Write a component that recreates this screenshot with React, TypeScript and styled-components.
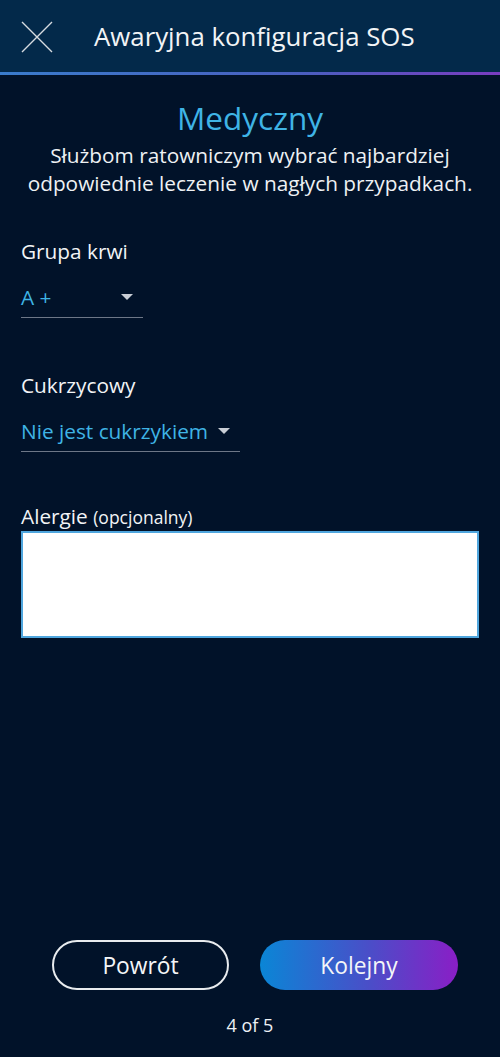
import * as React from 'react'
import styled, { createGlobalStyle } from 'styled-components'

const GlobalStyle = createGlobalStyle`
  html, body {
    margin: 0;
    padding: 0;
    background: #011229;
  }
  body {
    font-family: 'Open Sans', 'Noto Sans', sans-serif;
    color: #ffffff;
  }
`

const Screen = styled('div')`
  width: 500px;
  height: 1057px;
  display: flex;
  flex-direction: column;
  background: #011229;
  overflow: hidden;
`

const Header = styled('header')`
  height: 72px;
  display: flex;
  align-items: center;
  padding-left: 21px;
  background: #03294a;
  border-bottom: 3px solid transparent;
  border-image: linear-gradient(90deg, #3a7ccc 0%, #4a5fc0 60%, #7a3cc0 100%) 1;
  flex-shrink: 0;
`

const CloseButton = styled('button')`
  width: 32px;
  height: 32px;
  padding: 0;
  border: none;
  background: none;
  display: flex;
  margin-right: 41px;
  margin-top: 2px;
`

const Title = styled('h1')`
  margin: 0;
  font-size: 25.8px;
  font-weight: 400;
  color: #f2f4f6;
`

const Body = styled('main')`
  flex: 1;
  display: flex;
  flex-direction: column;
  padding: 23px 21px 0;
`

const SectionTitle = styled('h2')`
  margin: 0;
  text-align: center;
  font-size: 31.5px;
  line-height: 40px;
  font-weight: 400;
  color: #3fb4e5;
`

const Intro = styled('p')`
  margin: 3px 0 0;
  text-align: center;
  font-size: 20.8px;
  line-height: 28px;
  color: #eef1f4;
`

const Field = styled('div')<{ $top: number }>`
  margin-top: ${p => p.$top}px;
  display: flex;
  flex-direction: column;
`

const Label = styled('label')`
  font-size: 20.8px;
  line-height: 28px;
  color: #f2f4f6;
`

const Hint = styled('span')`
  font-size: 17.5px;
`

const Select = styled('div')<{ $width: number }>`
  width: ${p => p.$width}px;
  margin-top: 16px;
  height: 37px;
  display: flex;
  align-items: center;
  justify-content: space-between;
  border-bottom: 1px solid #6d7787;
  box-sizing: border-box;
  padding-right: 10px;
  padding-bottom: 4px;
  font-size: 20.8px;
  color: #3fb4e5;
`

const Caret = styled('span')`
  width: 0;
  height: 0;
  border-left: 6px solid transparent;
  border-right: 6px solid transparent;
  border-top: 6px solid #c9ced6;
`

const TextArea = styled('textarea')`
  margin-top: 0;
  height: 107px;
  box-sizing: border-box;
  border: 2px solid #4fa6de;
  background: #ffffff;
  resize: none;
  outline: none;
  font-family: inherit;
  font-size: 18px;
`

const Footer = styled('footer')`
  display: flex;
  flex-direction: column;
  align-items: center;
  padding-bottom: 20px;
`

const Buttons = styled('div')`
  display: flex;
  gap: 31px;
  margin-left: 10px;
`

const PillButton = styled('button')<{ $primary?: boolean }>`
  height: 50px;
  width: ${p => (p.$primary ? 198 : 177)}px;
  border-radius: 25px;
  box-sizing: border-box;
  font-family: inherit;
  font-size: 22.8px;
  color: #f4f6f8;
  border: ${p => (p.$primary ? 'none' : '2px solid #e8ebee')};
  background: ${p => (p.$primary ? 'linear-gradient(90deg, #0a86d6 0%, #4a4ec8 55%, #8a1ec6 100%)' : 'transparent')};
`

const Pager = styled('div')`
  margin-top: 23px;
  font-size: 18px;
  line-height: 24px;
  color: #eef1f4;
`

export default function App () {
  return (
    <Screen>
      <GlobalStyle />
      <Header>
        <CloseButton aria-label='Zamknij'>
          <svg width='32' height='32' viewBox='0 0 32 32'>
            <path d='M1 1 L31 31 M31 1 L1 31' stroke='#d6dbe0' strokeWidth='1.4' fill='none' />
          </svg>
        </CloseButton>
        <Title>Awaryjna konfiguracja SOS</Title>
      </Header>
      <Body>
        <SectionTitle>Medyczny</SectionTitle>
        <Intro>Służbom ratowniczym wybrać najbardziej<br />odpowiednie leczenie w nagłych przypadkach.</Intro>

        <Field $top={40}>
          <Label>Grupa krwi</Label>
          <Select $width={122}>
            <span>A +</span>
            <Caret />
          </Select>
        </Field>

        <Field $top={53}>
          <Label>Cukrzycowy</Label>
          <Select $width={219}>
            <span>Nie jest cukrzykiem</span>
            <Caret />
          </Select>
        </Field>

        <Field $top={50}>
          <Label>Alergie <Hint>(opcjonalny)</Hint></Label>
          <TextArea />
        </Field>
      </Body>
      <Footer>
        <Buttons>
          <PillButton>Powrót</PillButton>
          <PillButton $primary>Kolejny</PillButton>
        </Buttons>
        <Pager>4 of 5</Pager>
      </Footer>
    </Screen>
  )
}
